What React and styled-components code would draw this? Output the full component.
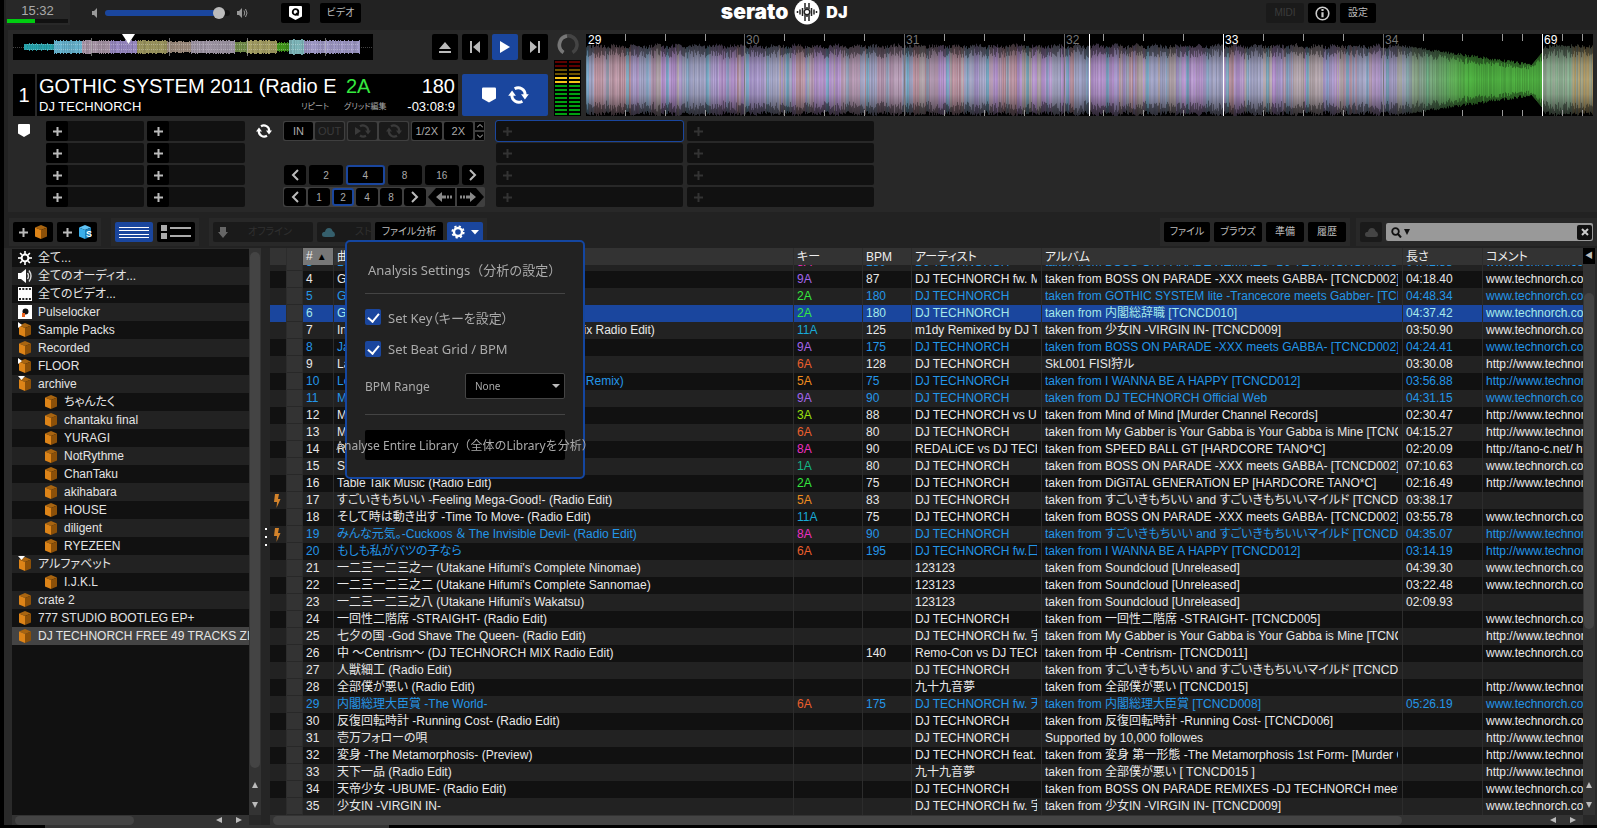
import React, { useLayoutEffect, useMemo, useRef, useState } from "react";
import styled, { createGlobalStyle, css } from "styled-components";

const crates = [
  { name: "全て...", icon: "gear" },
  { name: "全てのオーディオ...", icon: "audio" },
  { name: "全てのビデオ...", icon: "film" },
  { name: "Pulselocker", icon: "pulse" },
  { name: "Sample Packs", icon: "crate", fold: "closed" },
  { name: "Recorded", icon: "crate" },
  { name: "FLOOR", icon: "crate", fold: "closed" },
  { name: "archive", icon: "crate", fold: "open" },
  { name: "ちゃんたく", icon: "crate", child: true },
  { name: "chantaku final", icon: "crate", child: true },
  { name: "YURAGI", icon: "crate", child: true },
  { name: "NotRythme", icon: "crate", child: true },
  { name: "ChanTaku", icon: "crate", child: true },
  { name: "akihabara", icon: "crate", child: true },
  { name: "HOUSE", icon: "crate", child: true },
  { name: "diligent", icon: "crate", child: true },
  { name: "RYEZEEN", icon: "crate", child: true },
  { name: "アルファベット", icon: "crate", fold: "open" },
  { name: "I.J.K.L", icon: "crate", child: true },
  { name: "crate 2", icon: "crate" },
  { name: "777 STUDIO BOOTLEG EP+", icon: "crate" },
  { name: "DJ TECHNORCH FREE 49 TRACKS ZIP", icon: "crate" },
];

const WWW = "www.technorch.com";
const HTTP = "http://www.technorch.com";
const DJ = "DJ TECHNORCH";
const PARADE = "taken from BOSS ON PARADE -XXX meets GABBA- [TCNCD002]";
const GABBER = "taken from My Gabber is Your Gabba is Your Gabba is Mine [TCNCD004]";
const SUGOI = "taken from すごいきもちいい and すごいきもちいいマイルド [TCNCD016T]";

// number, title, key, bpm, artist, album, length, comment, played
const tracks = [
  [3, "Da Gabba", "8A", 180, DJ, "taken from BOSS ON PARADE REMIXES -DJ TECHNORCH meets", "04:42.88", WWW, 1],
  [4, "Gabba Parade", "9A", 87, "DJ TECHNORCH fw. MC", PARADE, "04:18.40", WWW],
  [5, "GOTHIC SYSTEM", "2A", 180, DJ, "taken from GOTHIC SYSTEM lite -Trancecore meets Gabber- [TCNCD003]", "04:48.34", WWW, 1],
  [6, "GOTHIC SYSTEM 2011 (Radio Edit)", "2A", 180, DJ, "taken from 内閣総辞職 [TCNCD010]", "04:37.42", WWW],
  [7, "Inside Of Me, Forever (DJ TECHNORCH Remix Radio Edit)", "11A", 125, "m1dy Remixed by DJ TECHNORCH", "taken from 少女IN -VIRGIN IN- [TCNCD009]", "03:50.90", WWW],
  [8, "Japan Hardcore", "9A", 175, DJ, PARADE, "04:24.41", WWW, 1],
  [9, "Last Hunt", "6A", 128, DJ, "SkL001 FISI狩ル", "03:30.08", HTTP],
  [10, "Love And Happy Songs 2 (DJ TECHNORCH's Remix)", "5A", 75, DJ, "taken from I WANNA BE A HAPPY [TCNCD012]", "03:56.88", HTTP, 1],
  [11, "Moonlight", "9A", 90, DJ, "taken from DJ TECHNORCH Official Web", "04:31.15", WWW, 1],
  [12, "Mind of Mind", "3A", 88, "DJ TECHNORCH vs USK", "taken from Mind of Mind [Murder Channel Records]", "02:30.47", HTTP],
  [13, "My Gabber", "6A", 80, DJ, GABBER, "04:15.27", HTTP],
  [14, "Rave Alert", "8A", 90, "REDALiCE vs DJ TECHNORCH", "taken from SPEED BALL GT [HARDCORE TANO*C]", "02:20.09", "http://tano-c.net/ http://"],
  [15, "Speed Parade", "1A", 80, DJ, PARADE, "07:10.63", WWW],
  [16, "Table Talk Music (Radio Edit)", "2A", 75, DJ, "taken from DiGiTAL GENERATiON EP [HARDCORE TANO*C]", "02:16.49", HTTP],
  [17, "すごいきもちいい -Feeling Mega-Good!- (Radio Edit)", "5A", 83, DJ, SUGOI, "03:38.17", ""],
  [18, "そして時は動き出す -Time To Move- (Radio Edit)", "11A", 75, DJ, PARADE, "03:55.78", WWW],
  [19, "みんな元気。-Cuckoos ＆ The Invisible Devil- (Radio Edit)", "8A", 90, DJ, SUGOI, "04:35.07", HTTP, 1],
  [20, "もしも私がバツの子なら", "6A", 195, "DJ TECHNORCH fw.口リ", "taken from I WANNA BE A HAPPY [TCNCD012]", "03:14.19", HTTP, 1],
  [21, "一二三一二三之一 (Utakane Hifumi's Complete Ninomae)", "", "", "123123", "taken from Soundcloud [Unreleased]", "04:39.30", WWW],
  [22, "一二三一二三之二 (Utakane Hifumi's Complete Sannomae)", "", "", "123123", "taken from Soundcloud [Unreleased]", "03:22.48", WWW],
  [23, "一二三一二三之八 (Utakane Hifumi's Wakatsu)", "", "", "123123", "taken from Soundcloud [Unreleased]", "02:09.93", ""],
  [24, "一回性二階席 -STRAIGHT- (Radio Edit)", "", "", DJ, "taken from 一回性二階席 -STRAIGHT- [TCNCD005]", "", WWW],
  [25, "七夕の国 -God Shave The Queen- (Radio Edit)", "", "", "DJ TECHNORCH fw. 宇宙", GABBER, "", HTTP],
  [26, "中 〜Centrism〜 (DJ TECHNORCH MIX Radio Edit)", "", 140, "Remo-Con vs DJ TECHNORCH", "taken from 中 -Centrism- [TCNCD011]", "", WWW],
  [27, "人獣細工 (Radio Edit)", "", "", DJ, SUGOI, "", ""],
  [28, "全部僕が悪い (Radio Edit)", "", "", "九十九音夢", "taken from 全部僕が悪い [TCNCD015]", "", HTTP],
  [29, "内閣総理大臣賞 -The World-", "6A", 175, "DJ TECHNORCH fw. 天音", "taken from 内閣総理大臣賞 [TCNCD008]", "05:26.19", WWW, 1],
  [30, "反復回転時計 -Running Cost- (Radio Edit)", "", "", DJ, "taken from 反復回転時計 -Running Cost- [TCNCD006]", "", WWW],
  [31, "壱万フォローの唄", "", "", DJ, "Supported by 10,000 followes", "", HTTP],
  [32, "変身 -The Metamorphosis- (Preview)", "", "", "DJ TECHNORCH feat. M", "taken from 変身 第一形態 -The Metamorphosis 1st Form- [Murder Channel]", "", HTTP],
  [33, "天下一品 (Radio Edit)", "", "", "九十九音夢", "taken from 全部僕が悪い [ TCNCD015 ]", "", HTTP],
  [34, "天帝少女 -UBUME- (Radio Edit)", "", "", DJ, "taken from BOSS ON PARADE REMIXES -DJ TECHNORCH meets", "", WWW],
  [35, "少女IN -VIRGIN IN-", "", "", "DJ TECHNORCH fw. 宇宙", "taken from 少女IN -VIRGIN IN- [TCNCD009]", "", WWW],
  [36, "", "", "", "", "", "", ""],
];

const keyColors = {
  "1A": "#12b886",
  "2A": "#35e83f",
  "3A": "#9be00f",
  "5A": "#f08c1e",
  "6A": "#ec5f2c",
  "8A": "#ee2fc0",
  "9A": "#a465ec",
  "11A": "#19a9d6",
};

const rng = (seed) => () => {
  seed = (seed * 1664525 + 1013904223) % 4294967296;
  return seed / 4294967296;
};

/* ---------- drawings ---------- */

const CrateIcon = ({ blue }) => (
  <svg width="14" height="16" viewBox="0 0 14 16" aria-hidden="true">
    <path d="M7 1 13 3.5 7 6 1 3.5z" fill={blue ? "#5fc3f5" : "#a86410"} />
    <path d="M1 3.5 7 6v9L1 12.4z" fill={blue ? "#3aaeea" : "#dd8418"} />
    <path d="M13 3.5 7 6v9l6-2.6z" fill={blue ? "#1f7fb8" : "#8c5008"} />
    {blue && (
      <text x="8" y="13" fontSize="9" fontWeight="700" fill="#fff">
        S
      </text>
    )}
  </svg>
);

const ListIcon = ({ icon, fold }) => {
  if (icon === "gear")
    return (
      <svg width="14" height="14" viewBox="-7 -7 14 14" aria-hidden="true">
        <circle r="3.4" fill="none" stroke="#fff" strokeWidth="2" />
        {[0, 45, 90, 135, 180, 225, 270, 315].map((a) => (
          <path key={a} d="M0-4V-7" stroke="#fff" strokeWidth="1.6" transform={`rotate(${a})`} />
        ))}
      </svg>
    );
  if (icon === "audio")
    return (
      <svg width="14" height="14" viewBox="0 0 14 14" aria-hidden="true">
        <path d="M0 4h3l5-4v14L3 10H0z" fill="#fff" />
        <path d="M9.500 4q2 3 0 6M11 1.500q4 5.500 0 11" fill="none" stroke="#ddd" strokeWidth="1.400" />
      </svg>
    );
  if (icon === "film")
    return (
      <svg width="14" height="14" viewBox="0 0 14 14" aria-hidden="true">
        <path d="M0 0h14v14H0z" fill="#fff" />
        <path d="M1 2h12M1 12h12" stroke="#222" strokeWidth="2" strokeDasharray="2 1.300" />
      </svg>
    );
  if (icon === "pulse")
    return (
      <svg width="14" height="14" viewBox="0 0 14 14" aria-hidden="true">
        <path d="M0 0h14v14H0z" fill="#fff" />
        <circle cx="7.500" cy="6.500" r="3" fill="#111" />
        <path d="M4 8h3v4H4z" fill="#f0641e" />
      </svg>
    );
  return (
    <svg width="14" height="16" viewBox="0 0 14 16" aria-hidden="true">
      <path d="M7 1 13 3.500 7 6 1 3.500z" fill="#a86410" />
      <path d="M1 3.500 7 6v9L1 12.400z" fill="#dd8418" />
      <path d="M13 3.500 7 6v9l6-2.600z" fill="#8c5008" />
      {fold === "closed" && <path d="M0 0v6l4-3z" fill="#fff" />}
      {fold === "open" && <path d="M0 0h7L3.500 4z" fill="#fff" />}
    </svg>
  );
};

const Shield = ({ w = 12, h = 13 }) => (
  <svg width={w} height={h} viewBox="0 0 12 13" aria-hidden="true">
    <path d="M1 0h10q1 0 1 1v8.500L6 13 0 9.500V1q0-1 1-1z" fill="#fff" />
  </svg>
);

const Cycle = ({ w = 16, color = "#fff" }) => (
  <svg width={w} height={Math.round(w * 0.875)} viewBox="0 0 16 14" aria-hidden="true">
    <path d="M5 2.200A5.400 5.400 0 0 1 13.200 7M11 11.800A5.400 5.400 0 0 1 2.800 7" fill="none" stroke={color} strokeWidth="2.200" />
    <path d="M10 6.500h6L13 10.500zM0 7.500h6L3 3.500z" fill={color} />
  </svg>
);

const Plus = ({ color = "#bbb", size = 9 }) => (
  <svg width={size} height={size} viewBox="0 0 9 9" aria-hidden="true">
    <path d="M4.500 0v9M0 4.500h9" stroke={color} strokeWidth="2" />
  </svg>
);

const Chevron = ({ right }) => (
  <svg width="8" height="12" viewBox="0 0 8 12" aria-hidden="true">
    <path d={right ? "M1 1l5 5-5 5" : "M7 1 2 6l5 5"} fill="none" stroke="#bbb" strokeWidth="2" />
  </svg>
);

const JumpArrow = ({ right }) => (
  <svg width="27" height="18" viewBox="0 0 27 18" aria-hidden="true">
    <g transform={right ? "translate(27 0) scale(-1 1)" : undefined}>
      <path d="M0 9 8 0h19v18H8z" fill="#000" />
      <path d="M8 9l6-5v3.500h4v3h-4V14zM19 7.500h2v3h-2zM22 7.500h2v3h-2z" fill="#888" />
    </g>
  </svg>
);

const Cloud = ({ color }) => (
  <svg width="13" height="9" viewBox="0 0 13 9" aria-hidden="true">
    <path d="M3 9Q0 9 0 6.500 0 4 3 3.800 3.500 0 7 0q2.800 0 3.500 3Q13 4 13 6.500 13 9 10.500 9z" fill={color} />
  </svg>
);

const Bolt = () => (
  <svg width="8" height="14" viewBox="0 0 8 14" aria-hidden="true">
    <path d="M2 0h4L5 5h2.500L3.500 14 4 8H1z" fill="#d2822a" />
  </svg>
);

const SpeakerIcon = ({ loud }) => (
  <svg width="12" height="10" viewBox="0 0 12 10" aria-hidden="true">
    <path d={loud ? "M0 3h2l3-3v10L2 7H0z" : "M6 3h2l3-3v10L8 7H6z"} fill="#999" />
    {loud && <path d="M7 2.500q1.500 2.500 0 5M8.500 1q3 4 0 8" fill="none" stroke="#999" />}
  </svg>
);

const overviewParts = [
  [11, 41, 3, "#27a5ae"],
  [41, 69, 6, "#69b6d2"],
  [69, 97, 6, "#ad9aac"],
  [97, 124, 6, "#9a8bc4"],
  [124, 154, 6, "#a09a62"],
  [154, 178, 5, "#a08e80"],
  [178, 222, 6, "#a59cab"],
  [222, 234, 5, "#77924e"],
  [234, 264, 6, "#a8a266"],
  [264, 276, 4, "#41961b"],
  [276, 291, 7, "#82bcc0"],
  [291, 347, 6, "#a39dcb"],
];

const Overview = () => {
  const rand = rng(7);
  const cols = [];
  overviewParts.forEach(([from, to, amp, color]) => {
    for (let x = from; x < to; x++) {
      const a = amp + Math.round(rand() * 1.4 - 0.4);
      cols.push(<rect key={x} x={x} y={13 - a} width="1" height={a * 2} fill={color} opacity={0.85 + rand() * 0.15} />);
    }
  });
  return (
    <OverviewSvg viewBox="0 0 360 26" preserveAspectRatio="none" role="img" aria-label="Track overview">
      <path d="M0 13.500h360" stroke="#444" strokeDasharray="1 1" />
      {cols}
      <path d="M14 10.500H346M14 15.500H346" stroke="#fff" strokeOpacity=".3" strokeDasharray="1 1" />
      <path d="M78.500 4v18M156.500 4v18M234.500 4v18M312.500 4v18" stroke="#bbb" strokeOpacity=".6" />
      <path d="M109 0h13L115.500 10z" fill="#fff" />
    </OverviewSvg>
  );
};

const mix = (a, b, t) => a.map((v, i) => Math.round(v + (b[i] - v) * t));
const palette = [
  [205, 170, 200],
  [215, 165, 180],
  [190, 170, 235],
  [205, 188, 192],
  [205, 165, 235],
  [180, 185, 225],
];

const Waveform = () => {
  const columns = useMemo(() => {
    const rand = rng(42);
    const list = [];
    let hue = palette[0];
    for (let x = 0; x < 1007; x++) {
      if (rand() < 0.2) hue = palette[Math.floor(rand() * palette.length)];
      let color = mix(hue, [225, 215, 235], rand() * 0.35);
      const beat = x % 20;
      if (beat < 3) color = mix(color, [125, 205, 235], x % 40 < 20 ? 0.7 : 0.4);
      let outer = 33 + rand() * 4 - Math.abs(beat - 10) * 0.25;
      if (x > 780 && x < 956) color = mix(color, [160, 195, 180], Math.min(1, (x - 780) / 70) * 0.6);
      if (x > 812 && x < 956) {
        color = mix(color, [90, 200, 75], Math.min(1, (x - 812) / 70));
        outer = x < 945 ? 33 - (x - 812) * 0.145 + rand() * 3 : 15 + (x - 945) * 1.2;
      }
      if (x >= 956) color = mix([175, 190, 170], x > 985 ? [215, 180, 110] : [160, 210, 170], rand());
      const shade = 0.85 + rand() * 0.15;
      list.push({ x, outer, inner: outer * (0.65 + rand() * 0.25), fill: `rgb(${color.map((c) => Math.round(c * shade)).join(",")})` });
    }
    return list;
  }, []);
  const bars = [
    [0, "29", "#fff"],
    [158, "30", "#777"],
    [318, "31", "#777"],
    [478, "32", "#777"],
    [637, "33", "#fff"],
    [797, "34", "#777"],
    [956, "69", "#fff"],
  ];
  const ticks = [39, 79, 119, 198, 238, 278, 358, 398, 438, 517, 557, 597, 677, 717, 757, 837, 876, 916, 936, 976, 996];
  return (
    <WaveSvg viewBox="0 0 1007 82" preserveAspectRatio="none" role="img" aria-label="Waveform">
      <defs>
        <linearGradient id="fade" x1="0" y1="0" x2="0" y2="1">
          <stop offset="0" stopColor="#000" stopOpacity=".55" />
          <stop offset=".3" stopColor="#000" stopOpacity=".1" />
          <stop offset=".5" stopColor="#000" stopOpacity="0" />
          <stop offset=".7" stopColor="#000" stopOpacity=".1" />
          <stop offset="1" stopColor="#000" stopOpacity=".6" />
        </linearGradient>
      </defs>
      {columns.map((c) => (
        <g key={c.x} fill={c.fill}>
          <rect x={c.x} y={46 - c.outer} width="1" height={c.outer * 2} opacity=".6" />
          <rect x={c.x} y={46 - c.inner} width="1" height={c.inner * 2} opacity=".8" />
        </g>
      ))}
      <rect y="9" width="1007" height="73" fill="url(#fade)" />
      {ticks.map((x) => (
        <path key={x} d={`M${x + 0.5} 0v7M${x + 0.5} 76v6`} stroke="#999" />
      ))}
      {bars.map(([x, label, color]) => (
        <g key={x}>
          {x > 0 && <path d={`M${x + 0.5} 0v82`} stroke={color} strokeOpacity={color === "#fff" ? 1 : 0.9} />}
          <text x={x + 2} y="10" fontSize="12" fill={color}>
            {label}
          </text>
        </g>
      ))}
      <path d="M503.500 0v82" stroke="#fff" strokeWidth="1" />
    </WaveSvg>
  );
};

const Logo = () => (
  <LogoBox aria-label="serato DJ">
    <LogoText size={21}>serato</LogoText>
    <svg width="26" height="26" viewBox="-13 -13 26 26" aria-hidden="true">
      <circle r="12.500" fill="#fff" />
      <path
        d="M-9.500-1v2M-7-2.500v5M-4.500-4v8M-2-9v6M-2 3v6M2-9v6M2 3v6M4.500-4v8M7-2.500v5M9.500-1v2M0-5v3M0 2v3"
        stroke="#222"
        strokeWidth="1.500"
      />
      <circle r="2.800" fill="none" stroke="#222" strokeWidth="1.500" />
    </svg>
    <LogoText size={16}>DJ</LogoText>
  </LogoBox>
);

/* ---------- parts ---------- */

const ScrollBar = ({ vertical, start, size }) => (
  <Track vertical={vertical ? 1 : 0}>
    <Thumb vertical={vertical ? 1 : 0} $start={start} $size={size} />
    <ScrollArrow $dir={vertical ? "up" : "left"} aria-label={vertical ? "Scroll up" : "Scroll left"} />
    <ScrollArrow $dir={vertical ? "down" : "right"} aria-label={vertical ? "Scroll down" : "Scroll right"} />
  </Track>
);

const TopBar = () => {
  const [volume, setVolume] = useState(96);
  return (
    <Header>
      <Status>
        <Clock>15:32</Clock>
        <Load>
          <span />
        </Load>
      </Status>
      <Volume>
        <SpeakerIcon />
        <input
          type="range"
          aria-label="Volume"
          min="0"
          max="100"
          value={volume}
          onChange={(e) => setVolume(Number(e.target.value))}
        />
        <SpeakerIcon loud />
      </Volume>
      <HeaderButtons>
        <DarkButton w={29} aria-label="Quantize">
          <svg width="13" height="14" viewBox="0 0 13 14" aria-hidden="true">
            <path d="M1 0h11q1 0 1 1v9.500L6.500 14 0 10.500V1q0-1 1-1z" fill="#fff" />
            <circle cx="6.500" cy="6" r="2.800" fill="none" stroke="#000" strokeWidth="1.800" />
            <path d="M7 7l2.500 2.500" stroke="#000" strokeWidth="1.600" />
          </svg>
        </DarkButton>
        <DarkButton w={41}>ビデオ</DarkButton>
      </HeaderButtons>
      <Logo />
      <HeaderRight>
        <DarkButton w={38} disabled>
          MIDI
        </DarkButton>
        <DarkButton w={28} aria-label="Info">
          <svg width="15" height="15" viewBox="0 0 15 15" aria-hidden="true">
            <circle cx="7.500" cy="7.500" r="6.300" fill="none" stroke="#ccc" strokeWidth="1.600" />
            <path d="M7.500 3v2M7.500 6.300v5" stroke="#ccc" strokeWidth="2.200" />
          </svg>
        </DarkButton>
        <DarkButton w={36}>設定</DarkButton>
      </HeaderRight>
    </Header>
  );
};

const vuColors = ["#5e0000", "#5e0000", "#6b5200", "#6b5200", "#f5c518", "#f5c518"];

const Deck = () => (
  <DeckPanel>
    <DeckTop>
      <DeckMain>
        <DeckRow>
          <Overview />
          <Transport>
            <TransportButton aria-label="Eject">
              <svg width="12" height="11" viewBox="0 0 12 11" aria-hidden="true">
                <path d="M6 0l6 7H0zM0 9h12v2H0z" fill="#bbb" />
              </svg>
            </TransportButton>
            <TransportButton aria-label="Previous track">
              <svg width="10" height="12" viewBox="0 0 10 12" aria-hidden="true">
                <path d="M0 0h2v12H0zM10 0v12L3 6z" fill="#bbb" />
              </svg>
            </TransportButton>
            <TransportButton $active aria-label="Play">
              <svg width="10" height="12" viewBox="0 0 10 12" aria-hidden="true">
                <path d="M0 0v12l10-6z" fill="#fff" />
              </svg>
            </TransportButton>
            <TransportButton aria-label="Next track">
              <svg width="10" height="12" viewBox="0 0 10 12" aria-hidden="true">
                <path d="M8 0h2v12H8zM0 0v12l7-6z" fill="#bbb" />
              </svg>
            </TransportButton>
          </Transport>
        </DeckRow>
        <DeckRow>
          <DeckNumber>1</DeckNumber>
          <TrackInfo>
            <TrackLine>
              <TrackTitle>GOTHIC SYSTEM 2011 (Radio E</TrackTitle>
              <TrackKey>2A</TrackKey>
              <span>180</span>
            </TrackLine>
            <TrackSub>
              <span>DJ TECHNORCH</span>
              <MiniButton>リピート</MiniButton>
              <MiniButton>グリッド編集</MiniButton>
              <time>-03:08:9</time>
            </TrackSub>
          </TrackInfo>
          <SyncButton aria-label="Cues and loops">
            <Shield w={14} h={16} />
            <Cycle w={21} />
          </SyncButton>
        </DeckRow>
      </DeckMain>
      <Meter>
        <svg width="22" height="22" viewBox="0 0 22 22" aria-hidden="true">
          <path d="M6.500 18.500A9 9 0 1 1 15.500 18.500" fill="none" stroke="#444" strokeWidth="3.500" />
          <path d="M6.500 18.500A9 9 0 0 1 10 2.100" fill="none" stroke="#777" strokeWidth="3.500" />
        </svg>
        <Vu>
          {Array.from({ length: 28 }, (_, i) => (
            <VuBar key={i} color={vuColors[Math.floor(i / 2)] || "#00a010"} />
          ))}
        </Vu>
      </Meter>
      <Waveform />
    </DeckTop>
    <Pads>
      <PadIcon w={33}>
        <Shield />
      </PadIcon>
      <CueGrid>
        {Array.from({ length: 8 }, (_, i) => (
          <CueCell key={i}>
            <button aria-label={`Set cue ${i + 1}`}>
              <Plus />
            </button>
          </CueCell>
        ))}
      </CueGrid>
      <PadIcon w={38} $end>
        <Cycle />
      </PadIcon>
      <LoopPanel>
        <LoopRow>
          <ButtonStrip>
            <LoopButton>IN</LoopButton>
            <LoopButton disabled>OUT</LoopButton>
          </ButtonStrip>
          <ButtonStrip>
            <LoopButton disabled aria-label="Reloop">
              <svg width="16" height="14" viewBox="0 0 16 14" aria-hidden="true">
                <path d="M0 3v8l6-4z" fill="#3a3a3a" />
                <path d="M5 2.200A5.400 5.400 0 0 1 13.200 7M11 11.800A5.400 5.400 0 0 1 5 11.500" fill="none" stroke="#3a3a3a" strokeWidth="2.200" />
                <path d="M10 6.500h6L13 10.500z" fill="#3a3a3a" />
              </svg>
            </LoopButton>
            <LoopButton disabled aria-label="Loop">
              <Cycle color="#3a3a3a" />
            </LoopButton>
          </ButtonStrip>
          <ButtonStrip $wide>
            <LoopButton>1/2X</LoopButton>
            <LoopButton>2X</LoopButton>
            <Stepper>
              <button aria-label="Slot up">
                <svg width="6" height="4" viewBox="0 0 6 4"><path d="M0 3.500l3-3 3 3" fill="none" stroke="#bbb" /></svg>
              </button>
              <button aria-label="Slot down">
                <svg width="6" height="4" viewBox="0 0 6 4"><path d="M0 .5l3 3 3-3" fill="none" stroke="#bbb" /></svg>
              </button>
            </Stepper>
          </ButtonStrip>
        </LoopRow>
        <BeatRow row={3}>
          <BeatButton aria-label="Shorter loops">
            <Chevron />
          </BeatButton>
          {["2", "4", "8", "16"].map((n) => (
            <BeatButton key={n} $grow $active={n === "4"}>
              {n}
            </BeatButton>
          ))}
          <BeatButton aria-label="Longer loops">
            <Chevron right />
          </BeatButton>
        </BeatRow>
        <BeatRow row={4} $strip>
          <BeatButton aria-label="Shorter rolls">
            <Chevron />
          </BeatButton>
          {["1", "2", "4", "8"].map((n) => (
            <BeatButton key={n} $active={n === "2"}>
              {n}
            </BeatButton>
          ))}
          <BeatButton aria-label="Longer rolls">
            <Chevron right />
          </BeatButton>
          <JumpButton aria-label="Beat jump back">
            <JumpArrow />
          </JumpButton>
          <JumpButton aria-label="Beat jump forward">
            <JumpArrow right />
          </JumpButton>
        </BeatRow>
      </LoopPanel>
      <SlotGrid>
        {Array.from({ length: 8 }, (_, i) => (
          <Slot key={i} $active={i === 0} aria-label={`Loop slot ${i + 1}`}>
            <Plus color="#333" />
          </Slot>
        ))}
      </SlotGrid>
    </Pads>
  </DeckPanel>
);

const AnalysisPopup = () => {
  const [setKey, toggleKey] = useState(true);
  const [setGrid, toggleGrid] = useState(true);
  return (
    <Popup>
      <PopupTitle>Analysis Settings（分析の設定）</PopupTitle>
      <CheckLabel>
        <input type="checkbox" checked={setKey} onChange={(e) => toggleKey(e.target.checked)} />
        Set Key（キーを設定）
      </CheckLabel>
      <CheckLabel>
        <input type="checkbox" checked={setGrid} onChange={(e) => toggleGrid(e.target.checked)} />
        Set Beat Grid / BPM
      </CheckLabel>
      <RangeRow>
        <label htmlFor="bpm-range">BPM Range</label>
        <SelectBox>
          <select id="bpm-range" defaultValue="None">
            <option>None</option>
            <option>58-115</option>
            <option>68-135</option>
            <option>78-155</option>
            <option>88-175</option>
            <option>98-195</option>
          </select>
        </SelectBox>
      </RangeRow>
      <AnalyseButton>Analyse Entire Library（全体のLibraryを分析）</AnalyseButton>
    </Popup>
  );
};

const Toolbar = () => {
  const [open, setOpen] = useState(true);
  return (
    <ToolBarRow>
      <ToolGroup>
        <DarkButton w={40} aria-label="Add crate">
          <Plus />
          <CrateIcon />
        </DarkButton>
        <DarkButton w={40} aria-label="Add smart crate">
          <Plus />
          <CrateIcon blue />
        </DarkButton>
      </ToolGroup>
      <ToolGroup>
        <DarkButton w={38} $active aria-label="Simple list view">
          <svg width="30" height="11" viewBox="0 0 30 11" aria-hidden="true">
            <path d="M0 .5h30M0 3.500h30M0 7.500h30M0 10.500h30" stroke="#fff" />
          </svg>
        </DarkButton>
        <DarkButton w={38} aria-label="Album art view">
          <svg width="30" height="14" viewBox="0 0 30 14" aria-hidden="true">
            <path d="M0 0h6v6H0zM0 8h6v6H0z" fill="#aaa" />
            <path d="M9 3h21M9 11h21" stroke="#aaa" strokeWidth="2" />
          </svg>
        </DarkButton>
      </ToolGroup>
      <ToolGroup>
        <DarkButton w={100} disabled $spread>
          <svg width="10" height="11" viewBox="0 0 10 11" aria-hidden="true">
            <path d="M2 0h6v5h2l-5 6-5-6h2z" fill="#666" />
          </svg>
          <Faint>オフライン</Faint>
        </DarkButton>
        <DarkButton w={54} disabled $spread>
          <Cloud color="#355f6c" />
          <Faint>スト</Faint>
        </DarkButton>
        <DarkButton w={68}>ファイル分析</DarkButton>
        <PopupAnchor>
          <DarkButton w={36} $active aria-label="Analysis settings" onClick={() => setOpen(!open)}>
            <svg width="14" height="14" viewBox="-7 -7 14 14" aria-hidden="true">
              <circle r="4" fill="none" stroke="#fff" strokeWidth="2.400" />
              <circle r="5.700" fill="none" stroke="#fff" strokeWidth="1.800" strokeDasharray="2.240 2.240" />
            </svg>
            <svg width="8" height="5" viewBox="0 0 8 5" aria-hidden="true">
              <path d="M0 0h8L4 4.500z" fill="#fff" />
            </svg>
          </DarkButton>
          {open && <AnalysisPopup />}
        </PopupAnchor>
      </ToolGroup>
      <ToolRight>
        <ToolGroup>
          <DarkButton w={46}>ファイル</DarkButton>
          <DarkButton w={48}>ブラウズ</DarkButton>
          <DarkButton w={38}>準備</DarkButton>
          <DarkButton w={38}>履歴</DarkButton>
        </ToolGroup>
        <ToolGroup>
          <DarkButton w={22} disabled aria-label="Cloud search">
            <Cloud color="#444" />
          </DarkButton>
          <SearchBox>
            <svg width="20" height="11" viewBox="0 0 20 11" aria-hidden="true">
              <circle cx="4.500" cy="4.500" r="3.300" fill="none" stroke="#111" strokeWidth="1.800" />
              <path d="M7 7l3 3.500" stroke="#111" strokeWidth="2" />
              <path d="M13 2h6l-3 6z" fill="#111" />
            </svg>
            <input type="text" aria-label="Search" />
            <button aria-label="Clear search">
              <svg width="8" height="8" viewBox="0 0 8 8" aria-hidden="true">
                <path d="M1 1l6 6M7 1 1 7" stroke="#ccc" strokeWidth="2" />
              </svg>
            </button>
          </SearchBox>
        </ToolGroup>
      </ToolRight>
    </ToolBarRow>
  );
};

const CratePanel = () => {
  const [selected, setSelected] = useState(21);
  return (
    <>
      <SideColumn>
        <CrateList>
          {crates.map((c, i) => (
            <li key={c.name}>
              <CrateRow $child={c.child} $odd={i % 2 === 1} $selected={i === selected} onClick={() => setSelected(i)}>
                <ListIcon icon={c.icon} fold={c.fold} />
                {c.name}
              </CrateRow>
            </li>
          ))}
        </CrateList>
        <ScrollBar start={3} size="50%" />
      </SideColumn>
      <ScrollColumn>
        <ScrollBar vertical start={4} size="91%" />
      </ScrollColumn>
    </>
  );
};

const Library = () => {
  const box = useRef(null);
  // the list opens part way down its third row
  useLayoutEffect(() => {
    box.current.scrollTop = 11;
  }, []);
  return (
    <>
      <TableColumn>
        <TableBox ref={box}>
          <Table>
            <colgroup>
              <col style={{ width: 17 }} />
              <col style={{ width: 16 }} />
              <col style={{ width: 31 }} />
              <col style={{ width: 460 }} />
              <col style={{ width: 69 }} />
              <col style={{ width: 49 }} />
              <col style={{ width: 130 }} />
              <col style={{ width: 361 }} />
              <col style={{ width: 80 }} />
              <col />
            </colgroup>
            <thead>
              <tr>
                <th aria-label="Status" />
                <th aria-label="Colour" />
                <SortHead>#<small>▲</small></SortHead>
                <th>曲名</th>
                <th>キー</th>
                <th>BPM</th>
                <th>アーティスト</th>
                <th>アルバム</th>
                <th>長さ</th>
                <th>コメント</th>
              </tr>
            </thead>
            <tbody>
              {tracks.map(([no, title, key, bpm, artist, album, length, comment, played]) => (
                <TrackRow key={no} $odd={no % 2 === 1} $played={played} $selected={no === 6}>
                  <td>{(no === 17 || no === 19) && <Bolt />}</td>
                  <ColourCell />
                  <td>{no < 36 && no}</td>
                  <td>{title}</td>
                  <KeyCell color={keyColors[key]}>{key}</KeyCell>
                  <td>{bpm}</td>
                  <td>
                    <Clip>{artist}</Clip>
                  </td>
                  <td>
                    <Clip>{album}</Clip>
                  </td>
                  <td>{length}</td>
                  <td>{comment}</td>
                </TrackRow>
              ))}
            </tbody>
          </Table>
        </TableBox>
        <ScrollBar start={3} size="86%" />
      </TableColumn>
      <ScrollColumn>
        <ColumnMenu aria-label="Choose columns">◀</ColumnMenu>
        <ScrollBar vertical start={29} size="61%" />
      </ScrollColumn>
    </>
  );
};

const App = () => (
  <>
    <GlobalStyle />
    <Page>
      <TopBar />
      <Deck />
      <Toolbar />
      <Browser>
        <CratePanel />
        <Splitter>
          <i />
          <i />
          <i />
        </Splitter>
        <Library />
      </Browser>
      <BottomEdge />
    </Page>
  </>
);

export default App;

/* ---------- styles ---------- */

const blue = "#1a469e";

const GlobalStyle = createGlobalStyle`
  * {
    box-sizing: border-box;
  }

  body {
    margin: 0;
    background: #000;
    color: #e4e4e4;
    font-family: "Liberation Sans", "Noto Sans CJK JP", sans-serif;
    font-size: 12px;
    font-feature-settings: "palt";
  }

  button, input, select {
    margin: 0;
    padding: 0;
    border: 0;
    font: inherit;
    font-feature-settings: inherit;
    color: inherit;
  }

  svg {
    flex: none;
    display: block;
  }
`;

const Page = styled.div`
  display: flex;
  flex-direction: column;
  height: 100vh;
  overflow: hidden;
  border-left: 4px solid #000;
  background: #222;
`;

const Header = styled.header`
  position: relative;
  display: flex;
  height: 30px;
  padding: 0 4px 0 2px;
`;

const Status = styled.div`
  width: 64px;
  height: 25px;
  padding: 3px 2px 0 1px;
  background: #282828;
`;

const Clock = styled.div`
  font-size: 13px;
  line-height: 16px;
  text-align: center;
  color: #aaa;
`;

const Load = styled.div`
  height: 4px;
  background: #111;

  span {
    display: block;
    width: 46%;
    height: 4px;
    background: #00cc10;
  }
`;

const Volume = styled.div`
  display: flex;
  align-items: center;
  gap: 7px;
  height: 26px;
  margin-left: 16px;

  input {
    width: 125px;
    height: 6px;
    appearance: none;
    border-radius: 3px;
    background: linear-gradient(to right, ${blue} 92%, #111 92%);
  }

  input::-webkit-slider-thumb {
    appearance: none;
    width: 12px;
    height: 12px;
    border-radius: 50%;
    background: #bbb;
  }
`;

const HeaderButtons = styled.div`
  display: flex;
  gap: 10px;
  margin: 3px 0 0 32px;
`;

const HeaderRight = styled.div`
  display: flex;
  gap: 4px;
  margin: 3px 217px 0 auto;
`;

const DarkButton = styled.button`
  display: flex;
  align-items: center;
  justify-content: center;
  gap: 6px;
  flex: none;
  width: ${(props) => props.w}px;
  height: 20px;
  border-radius: 2px;
  background: ${(props) => (props.$active ? blue : "#000")};
  color: #bbb;
  font-size: 10px;
  line-height: 20px;
  white-space: nowrap;

  &:disabled {
    background: #1a1a1a;
    color: #3c3c3c;
  }

  ${(props) =>
    props.$spread &&
    css`
      justify-content: flex-start;
      gap: 20px;
      padding-left: 5px;
    `}
`;

const Faint = styled.span`
  color: #303030;
`;

const LogoBox = styled.div`
  position: absolute;
  left: 45%;
  top: 0;
  display: flex;
  align-items: center;
  gap: 6px;
  height: 24px;
`;

const LogoText = styled.span`
  color: #fff;
  font-family: Inter, "Open Sans", sans-serif;
  font-weight: 900;
  font-size: ${(props) => props.size}px;
  line-height: 24px;
`;

const DeckPanel = styled.section`
  margin-left: 4px;
  padding: 4px 4px 5px 5px;
  background: #282828;
`;

const DeckTop = styled.div`
  display: flex;
  height: 82px;
`;

const DeckMain = styled.div`
  display: flex;
  flex-direction: column;
  justify-content: space-between;
  width: 535px;
`;

const DeckRow = styled.div`
  display: flex;
`;

const OverviewSvg = styled.svg`
  width: 360px;
  height: 26px;
  background: #000;
`;

const Transport = styled.div`
  display: flex;
  gap: 4px;
  margin-left: auto;
`;

const TransportButton = styled.button`
  display: grid;
  place-items: center;
  width: 26px;
  height: 26px;
  border-radius: 2px;
  background: ${(props) => (props.$active ? blue : "#000")};
`;

const DeckNumber = styled.div`
  width: 22px;
  height: 42px;
  margin-right: 2px;
  background: #000;
  color: #fff;
  font-size: 20px;
  line-height: 42px;
  text-align: center;
`;

const TrackInfo = styled.div`
  flex: 1;
  min-width: 0;
  height: 42px;
  padding: 0 3px 0 2px;
  background: #000;
  color: #fff;
`;

const TrackLine = styled.div`
  display: flex;
  font-size: 20px;
  line-height: 25px;
`;

const TrackTitle = styled.span`
  width: 299px;
  white-space: nowrap;
`;

const TrackKey = styled.span`
  flex: 1;
  padding-left: 8px;
  color: ${keyColors["2A"]};
`;

const TrackSub = styled.div`
  display: flex;
  font-size: 13px;
  line-height: 16px;

  span {
    width: 262px;
  }

  time {
    margin-left: auto;
  }
`;

const MiniButton = styled.button`
  width: 43px;
  background: none;
  color: #aaa;
  font-size: 8px;
  text-align: left;
  white-space: nowrap;
`;

const SyncButton = styled.button`
  display: flex;
  align-items: center;
  justify-content: center;
  gap: 12px;
  width: 86px;
  height: 42px;
  margin-left: 4px;
  border-radius: 2px;
  background: ${blue};
`;

const Meter = styled.div`
  display: flex;
  flex-direction: column;
  align-items: center;
  justify-content: space-between;
  width: 27px;
  margin: 0 5px 0 6px;
`;

const Vu = styled.div`
  display: grid;
  grid-template-columns: 1fr 1fr;
  gap: 2px;
  width: 100%;
  padding: 1px;
  background: #000;
`;

const VuBar = styled.i`
  height: 2px;
  background: ${(props) => props.color};
`;

const WaveSvg = styled.svg`
  flex: 1;
  min-width: 0;
  height: 82px;
  background: #000;
`;

const Pads = styled.div`
  display: flex;
  padding-top: 5px;
`;

const PadIcon = styled.div`
  display: flex;
  justify-content: center;
  width: ${(props) => props.w}px;
  padding: 3px ${(props) => (props.$end ? 0 : 11)}px 0 0;
`;

const CueGrid = styled.div`
  display: grid;
  grid-template-columns: 98px 98px;
  gap: 2px 3px;
`;

const CueCell = styled.div`
  height: 20px;
  border-radius: 2px;
  background: #111;

  button {
    display: grid;
    place-items: center;
    width: 22px;
    height: 20px;
    border-radius: 2px;
    background: #000;
  }
`;

const LoopPanel = styled.div`
  display: grid;
  grid-template-rows: repeat(4, 20px);
  gap: 2px;
  width: 202px;
`;

const LoopRow = styled.div`
  display: flex;
  justify-content: space-between;
`;

const ButtonStrip = styled.div`
  display: flex;
  gap: 2px;
  width: ${(props) => (props.$wide ? 74 : 62)}px;
  padding: 1px;
  border-radius: 2px;
  background: #3f3f3f;
`;

const LoopButton = styled.button`
  display: grid;
  place-items: center;
  flex: 1;
  border-radius: 2px;
  background: #000;
  color: #aaa;
  font-size: 11px;

  &:disabled {
    background: #1a1a1a;
    color: #3a3a3a;
  }
`;

const Stepper = styled.div`
  display: flex;
  flex-direction: column;
  gap: 2px;
  width: 9px;

  button {
    display: grid;
    place-items: center;
    flex: 1;
    background: #000;
  }
`;

const BeatRow = styled.div`
  display: flex;
  justify-content: space-between;
  grid-row: ${(props) => props.row};
  gap: ${(props) => (props.$strip ? 2 : 3)}px;
  padding: ${(props) => (props.$strip ? 1 : 0)}px 1px;
  border-radius: 2px;
  background: ${(props) => (props.$strip ? "#3f3f3f" : "none")};
`;

const BeatButton = styled.button`
  display: grid;
  place-items: center;
  flex: ${(props) => (props.$grow ? "1" : "0 1 22px")};
  border: ${(props) => (props.$active ? `2px solid ${blue}` : "0")};
  border-radius: 3px;
  background: #000;
  color: #aaa;
  font-size: 10px;
`;

const JumpButton = styled.button`
  width: 27px;
  height: 18px;
  background: none;
`;

const SlotGrid = styled.div`
  display: grid;
  grid-template-columns: 187px 187px;
  gap: 2px 4px;
  margin-left: 11px;
`;

const Slot = styled.button`
  display: flex;
  align-items: center;
  height: 20px;
  padding-left: 7px;
  border-radius: 2px;
  outline: ${(props) => (props.$active ? `1px solid ${blue}` : "none")};
  background: #111;
`;

const ToolBarRow = styled.div`
  display: flex;
  align-items: flex-start;
  gap: 10px;
  height: 36px;
  padding: 6px 0 0 5px;
`;

const ToolRight = styled.div`
  display: flex;
  gap: 6px;
  margin-left: auto;
`;

const ToolGroup = styled.div`
  display: flex;
  gap: 4px;
  padding: 4px;
  background: #282828;
`;

const SearchBox = styled.div`
  display: flex;
  align-items: center;
  width: 207px;
  height: 18px;
  margin-top: 1px;
  padding: 0 1px 0 5px;
  border-radius: 2px;
  background: #999;

  input {
    flex: 1;
    min-width: 0;
    background: none;
    outline: none;
    color: #111;
  }

  button {
    display: grid;
    place-items: center;
    width: 15px;
    height: 15px;
    border-radius: 2px;
    background: #111;
  }
`;

const PopupAnchor = styled.div`
  position: relative;
`;

const Popup = styled.div`
  position: absolute;
  z-index: 5;
  top: 18px;
  left: -102px;
  width: 240px;
  padding: 17px 18px;
  border: 2px solid #1446a0;
  border-radius: 5px;
  background: #222;
  color: #aaa;
  font-family: "Noto Sans", "Noto Sans CJK JP", sans-serif;
`;

const PopupTitle = styled.h2`
  margin: 0 0 15px;
  padding: 0 3px 12px;
  border-bottom: 1px solid #444;
  font-size: 13px;
  font-feature-settings: normal;
  font-weight: 400;
  line-height: 22px;
  white-space: nowrap;
`;

const CheckLabel = styled.label`
  display: flex;
  align-items: center;
  gap: 7px;
  height: 16px;
  margin-bottom: 16px;
  font-size: 13px;
  white-space: nowrap;

  input {
    width: 16px;
    height: 16px;
    appearance: none;
    border-radius: 2px;
    background: ${blue};
  }

  input:checked::after {
    content: "";
    display: block;
    width: 5px;
    height: 9px;
    margin: 2px 0 0 5px;
    border: solid #fff;
    border-width: 0 2px 2px 0;
    transform: rotate(40deg);
  }
`;

const RangeRow = styled.div`
  display: flex;
  align-items: center;
  justify-content: space-between;
  padding-bottom: 15px;
  border-bottom: 1px solid #444;
`;

const SelectBox = styled.div`
  position: relative;

  select {
    display: block;
    width: 100px;
    height: 26px;
    padding-left: 9px;
    appearance: none;
    border: 1px solid #444;
    border-radius: 2px;
    background: #000;
    font-size: 10px;
  }

  &::after {
    content: "";
    position: absolute;
    top: 11px;
    right: 5px;
    border: 4px solid transparent;
    border-top-color: #bbb;
    border-bottom: 0;
    pointer-events: none;
  }
`;

const AnalyseButton = styled.button`
  display: flex;
  align-items: center;
  justify-content: center;
  width: 100%;
  height: 30px;
  margin-top: 15px;
  border-radius: 2px;
  background: #000;
  font-feature-settings: normal;
  white-space: nowrap;
`;

const Browser = styled.main`
  display: flex;
  flex: 1;
  min-height: 0;
  padding: 0 2px 0 8px;
  background: #2a2a2a;
`;

const SideColumn = styled.aside`
  display: flex;
  flex-direction: column;
  width: 237px;
  padding-top: 1px;
`;

const CrateList = styled.ul`
  flex: 1;
  min-height: 0;
  margin: 0;
  padding: 0;
  overflow: hidden;
  list-style: none;
  background: #111;
`;

const CrateRow = styled.button`
  display: flex;
  align-items: center;
  gap: 6px;
  width: 100%;
  height: 18px;
  padding-left: ${(props) => (props.$child ? 32 : 6)}px;
  overflow: hidden;
  background: ${(props) => (props.$selected ? "#444" : props.$odd ? "#222" : "#111")};
  line-height: 18px;
  white-space: nowrap;
`;

const ScrollColumn = styled.div`
  display: flex;
  flex-direction: column;
  width: 12px;
  padding-bottom: 10px;
  background: #282828;
`;

const Track = styled.div`
  display: flex;
  flex-direction: ${(props) => (props.vertical ? "column" : "row")};
  align-items: center;
  flex: ${(props) => (props.vertical ? "1" : "0 0 10px")};
  min-height: 0;
  background: #333;
`;

const Thumb = styled.div`
  flex: none;
  border-radius: 5px;
  background: #444;
  ${(props) =>
    props.vertical
      ? css`
          width: 10px;
          height: ${props.$size};
          margin: ${props.$start}px 0 auto;
        `
      : css`
          width: ${props.$size};
          height: 9px;
          margin: 1px auto 0 ${props.$start}px;
        `}
`;

const arrowSides = {
  up: "border-bottom-color: #bbb; border-top: 0; margin-bottom: 14px;",
  down: "border-top-color: #bbb; border-bottom: 0; margin-bottom: 7px;",
  left: "border-right-color: #bbb; border-left: 0; margin-right: 14px;",
  right: "border-left-color: #bbb; border-right: 0; margin-right: 7px;",
};

const ScrollArrow = styled.button`
  flex: none;
  width: 0;
  height: 0;
  background: none;
  border: ${(props) => (props.$dir === "up" || props.$dir === "down" ? "6px" : "3px")} solid transparent;
  border-left-width: ${(props) => (props.$dir === "up" || props.$dir === "down" ? 3 : 6)}px;
  border-right-width: ${(props) => (props.$dir === "up" || props.$dir === "down" ? 3 : 6)}px;
  ${(props) => arrowSides[props.$dir]}
`;

const Splitter = styled.div`
  display: flex;
  flex-direction: column;
  align-items: center;
  justify-content: center;
  gap: 6px;
  width: 9px;
  background: #252525;

  i {
    width: 2px;
    height: 2px;
    background: #fff;
  }
`;

const TableColumn = styled.div`
  display: flex;
  flex-direction: column;
  flex: 1;
  min-width: 0;
`;

const TableBox = styled.div`
  flex: 1;
  min-height: 0;
  overflow: hidden;
  background: #111;
`;

const Table = styled.table`
  width: 100%;
  table-layout: fixed;
  border-collapse: separate;
  border-spacing: 0;

  th,
  td {
    height: 17px;
    padding: 0 4px 0 3px;
    border-right: 1px solid #2c2c2c;
    overflow: hidden;
    line-height: 17px;
    text-align: left;
    white-space: nowrap;
  }

  th {
    position: sticky;
    top: 0;
    height: 16px;
    background: #333;
    color: #eee;
    font-weight: 400;
    line-height: 16px;
  }

  th:last-child,
  td:last-child {
    padding-right: 0;
    border-right: 0;
  }
`;

const Clip = styled.div`
  overflow: hidden;
`;

const SortHead = styled.th`
  && {
    background: #777;
  }

  small {
    margin-left: 4px;
    color: #000;
    font-size: 10px;
  }
`;

const TrackRow = styled.tr`
  background: ${(props) => (props.$selected ? blue : props.$odd ? "#222" : "#111")};
  color: ${(props) => (props.$selected ? "#a5e9ea" : props.$played ? "#2496e8" : "#e8e8e8")};
`;

const ColourCell = styled.td`
  background: #333;
  border-bottom: 1px solid #282828;
`;

const KeyCell = styled.td`
  color: ${(props) => props.color};
`;

const ColumnMenu = styled.button`
  width: 12px;
  height: 16px;
  background: #000;
  color: #bbb;
  font-size: 8px;
  line-height: 16px;
`;

const BottomEdge = styled.footer`
  flex: none;
  height: 3px;
  background: linear-gradient(to right, #000 41px, #333 41px, #333 385px, #000 385px);
`;
